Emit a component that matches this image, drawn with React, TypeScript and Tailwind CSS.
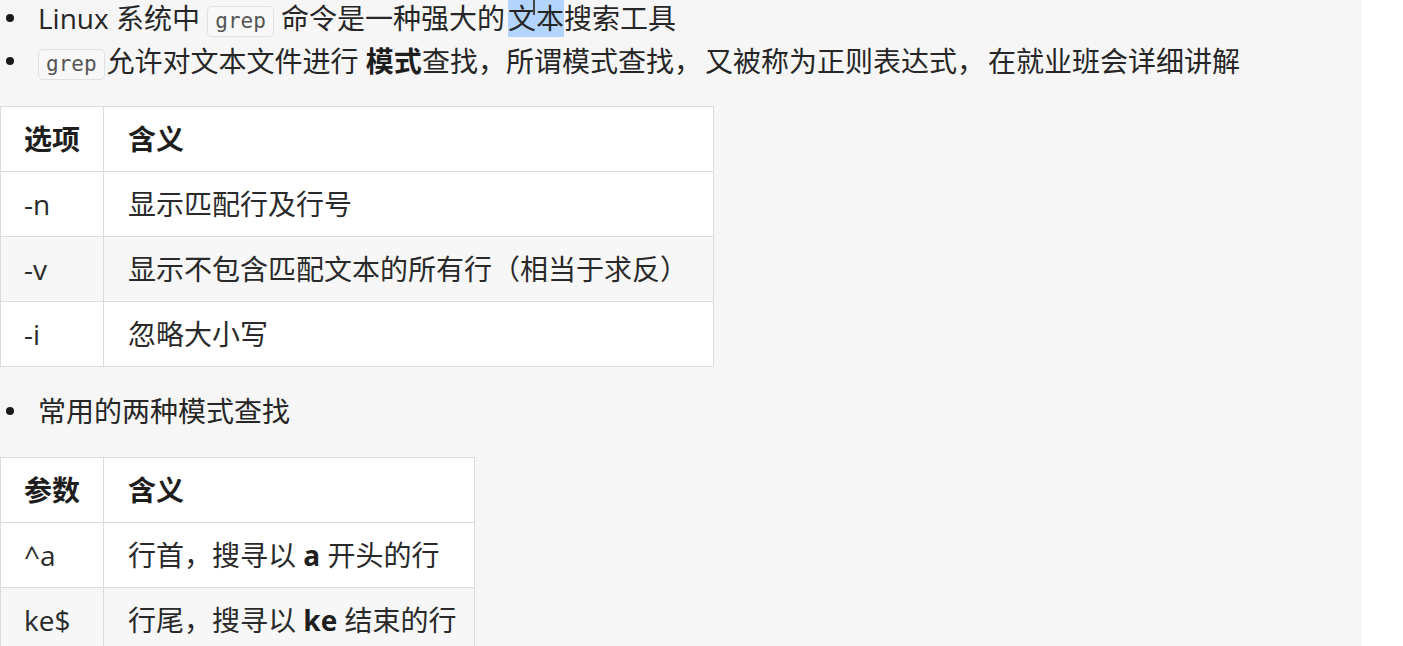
const body = '"Open Sans", "Noto Sans CJK SC", sans-serif';
const mono = '"DejaVu Sans Mono", monospace';

function Code({ children }: { children: string }) {
  return (
    <code
      className="inline-block h-[31px] px-[7px] border border-[#e0e0e0] rounded-[5px] bg-[#f8f8f8] text-[#555] text-[21px] leading-[29px] align-middle"
      style={{ fontFamily: mono }}
    >
      {children}
    </code>
  );
}

function Bullet({ children }: { children: React.ReactNode }) {
  return (
    <div className="flex items-center h-[36px]">
      <span className="w-[8px] h-[8px] rounded-full bg-[#1a1a1a] ml-[6px] mr-[24px] shrink-0" />
      <div className="whitespace-nowrap">{children}</div>
    </div>
  );
}

type Row = { k: React.ReactNode; v: React.ReactNode };

function Table({ head, rows, width }: { head: [string, string]; rows: Row[]; width: string }) {
  return (
    <table className={`${width} border-collapse border border-[#dcdcdc] bg-white text-[#2a2a2a] text-[28px]`}>
      <thead>
        <tr className="h-[65px]">
          <th className="w-[103px] border border-[#dcdcdc] text-left pl-[23px] font-bold text-[#1e1e1e]">{head[0]}</th>
          <th className="border border-[#dcdcdc] text-left pl-[24px] font-bold text-[#1e1e1e]">{head[1]}</th>
        </tr>
      </thead>
      <tbody>
        {rows.map((r, i) => (
          <tr key={i} className={`h-[65px] ${i % 2 === 1 ? 'bg-[#f7f7f7]' : 'bg-white'}`}>
            <td className="border border-[#dcdcdc] pl-[23px]">{r.k}</td>
            <td className="border border-[#dcdcdc] pl-[24px]">{r.v}</td>
          </tr>
        ))}
      </tbody>
    </table>
  );
}

export default function App() {
  return (
    <div className="flex w-[1403px] h-[646px] overflow-hidden bg-white">
      <div
        className="w-[1362px] h-full bg-[#f6f6f6] text-[#262626] text-[28px]"
        style={{ fontFamily: body }}
      >
        {/* top bullets */}
        <div className="flex flex-col gap-[7px]">
          <Bullet>
            Linux 系统中 <Code>grep</Code> 命令是一种强大的
            <span className="relative bg-[#b3d4fc] ml-[3px]">
              文本
              <span className="absolute left-[25px] top-[-4px] w-[2px] h-[20px] bg-[#444]" />
            </span>
            搜索工具
          </Bullet>
          <Bullet>
            <Code>grep</Code>
            <span className="ml-[2px]">允许对文本文件进行 </span>
            <b className="text-[#1e1e1e]">模式</b>查找，所谓模式查找，<span className="ml-[3px]">又被称为正则表达式，</span><span className="ml-[3px]">在就业班会详细讲解</span>
          </Bullet>
        </div>

        <div className="mt-[27px]">
          <Table
            width="w-[714px]"
            head={['选项', '含义']}
            rows={[
              { k: '-n', v: '显示匹配行及行号' },
              { k: '-v', v: '显示不包含匹配文本的所有行（相当于求反）' },
              { k: '-i', v: '忽略大小写' },
            ]}
          />
        </div>

        <div className="mt-[26px]">
          <Bullet>常用的两种模式查找</Bullet>
        </div>

        <div className="mt-[28px]">
          <Table
            width="w-[475px]"
            head={['参数', '含义']}
            rows={[
              { k: '^a', v: <>行首，搜寻以 <b className="text-[#1e1e1e]">a</b> 开头的行</> },
              { k: 'ke$', v: <>行尾，搜寻以 <b className="text-[#1e1e1e]">ke</b> 结束的行</> },
            ]}
          />
        </div>
      </div>
    </div>
  );
}
